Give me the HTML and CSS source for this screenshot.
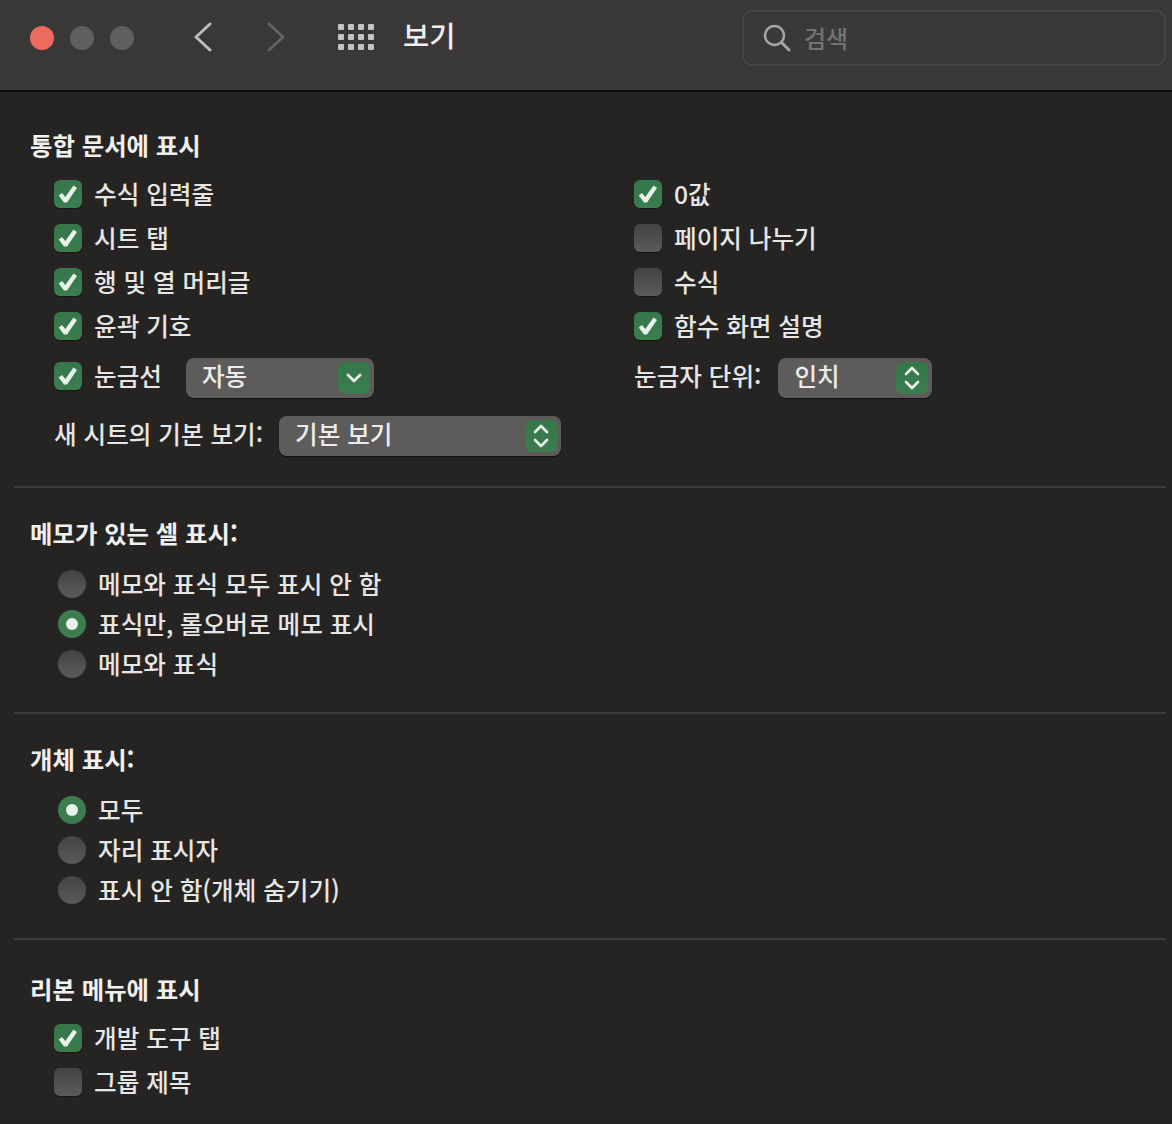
FILE: index.html

```html
<!DOCTYPE html>
<html lang="ko">
<head>
    <meta charset="UTF-8">
    <title>보기</title>
    <link rel="stylesheet" href="styles.css">
</head>
<body>

    <header class="toolbar">
        <div class="traffic">
            <span class="light red"></span>
            <span class="light"></span>
            <span class="light"></span>
        </div>
        <svg class="nav-back" width="20" height="30" viewBox="0 0 20 30"><path d="M17 2 L3 15 L17 28" fill="none" stroke="#bdbdbb" stroke-width="3" stroke-linecap="round" stroke-linejoin="round"/></svg>
        <svg class="nav-next" width="20" height="30" viewBox="0 0 20 30"><path d="M3 2 L17 15 L3 28" fill="none" stroke="#626261" stroke-width="3" stroke-linecap="round" stroke-linejoin="round"/></svg>
        <div class="app-grid">
            <i></i><i></i><i></i><i></i>
            <i></i><i></i><i></i><i></i>
            <i></i><i></i><i></i><i></i>
        </div>
        <div class="toolbar-title">보기</div>
        <div class="search">
            <svg width="28" height="28" viewBox="0 0 28 28"><circle cx="11.5" cy="11.5" r="9.5" fill="none" stroke="#a5a5a3" stroke-width="2.4"/><path d="M18.5 18.5 L26 26" stroke="#a5a5a3" stroke-width="3" stroke-linecap="round"/></svg>
            <span>검색</span>
        </div>
    </header>

    <section class="group group-display">
        <h3>통합 문서에 표시</h3>
        <div class="columns">
            <div class="col-left">
                <label class="row"><span class="check on"></span>수식 입력줄</label>
                <label class="row"><span class="check on"></span>시트 탭</label>
                <label class="row"><span class="check on"></span>행 및 열 머리글</label>
                <label class="row"><span class="check on"></span>윤곽 기호</label>
                <div class="row row-select">
                    <span class="check on"></span>눈금선
                    <div class="select select-auto">자동<span class="arrows"><svg width="16" height="10" viewBox="0 0 16 10"><path d="M2 2 L8 8 L14 2" fill="none" stroke="#eef3ef" stroke-width="2.8" stroke-linecap="round" stroke-linejoin="round"/></svg></span></div>
                </div>
            </div>
            <div class="col-right">
                <label class="row"><span class="check on"></span>0값</label>
                <label class="row"><span class="check"></span>페이지 나누기</label>
                <label class="row"><span class="check"></span>수식</label>
                <label class="row"><span class="check on"></span>함수 화면 설명</label>
                <div class="row row-select row-units">
                    눈금자 단위:
                    <div class="select select-units">인치<span class="arrows"><svg width="16" height="26" viewBox="0 0 16 26"><path d="M2 9 L8 3 L14 9 M2 17 L8 23 L14 17" fill="none" stroke="#eef3ef" stroke-width="2.6" stroke-linecap="round" stroke-linejoin="round"/></svg></span></div>
                </div>
            </div>
        </div>
        <div class="row row-default">
            새 시트의 기본 보기:
            <div class="select select-default">기본 보기<span class="arrows"><svg width="16" height="26" viewBox="0 0 16 26"><path d="M2 9 L8 3 L14 9 M2 17 L8 23 L14 17" fill="none" stroke="#eef3ef" stroke-width="2.6" stroke-linecap="round" stroke-linejoin="round"/></svg></span></div>
        </div>
    </section>

    <section class="group group-radio group-memo">
        <h3>메모가 있는 셀 표시:</h3>
        <label class="radio-row"><span class="radio"></span>메모와 표식 모두 표시 안 함</label>
        <label class="radio-row"><span class="radio on"></span>표식만, 롤오버로 메모 표시</label>
        <label class="radio-row"><span class="radio"></span>메모와 표식</label>
    </section>

    <section class="group group-radio group-objects">
        <h3>개체 표시:</h3>
        <label class="radio-row"><span class="radio on"></span>모두</label>
        <label class="radio-row"><span class="radio"></span>자리 표시자</label>
        <label class="radio-row"><span class="radio"></span>표시 안 함(개체 숨기기)</label>
    </section>

    <section class="group group-ribbon">
        <h3>리본 메뉴에 표시</h3>
        <label class="row"><span class="check on"></span>개발 도구 탭</label>
        <label class="row"><span class="check"></span>그룹 제목</label>
    </section>

</body>
</html>
```

FILE: styles.css

```css
* {
    margin: 0;
    padding: 0;
    box-sizing: border-box;
}
html, body {
    height: 1124px;
    overflow: hidden;
}
body {
    background-color: #262423;
    color: #e6e6e5;
    font-family: "Noto Sans CJK KR", "Noto Sans", sans-serif;
    font-size: 24.6px;
    font-weight: 500;
}

/* Toolbar */
.toolbar {
    height: 92px;
    background: linear-gradient(#3a3938, #393837);
    border-bottom: 2px solid #0c0b0b;
    display: flex;
    align-items: center;
    padding: 0 6px 14px 30px;
}
.traffic {
    display: flex;
    gap: 16px;
}
.light {
    width: 24px;
    height: 24px;
    border-radius: 50%;
    background: #5f5f5d;
}
.light.red {
    background: #ec6a5e;
}
.nav-back {
    margin: 0 0 2px 59px;
}
.nav-next {
    margin: 0 0 2px 53px;
}
.app-grid {
    margin: 0 0 2px 52px;
    display: grid;
    grid-template-columns: repeat(4, 6px);
    grid-template-rows: repeat(3, 6px);
    gap: 4px;
}
.app-grid i {
    background: #c4c4c2;
    border-radius: 1px;
}
.toolbar-title {
    margin-left: 29px;
    color: #efefee;
    font-size: 28.5px;
    font-weight: 500;
    line-height: 40px;
    position: relative;
    top: -3px;
}
.search {
    margin-left: auto;
    width: 424px;
    height: 56px;
    border: 2px solid #454544;
    border-radius: 10px;
    background: #3a3938;
    display: flex;
    align-items: center;
    padding-left: 20px;
    gap: 13px;
    color: #737372;
    font-size: 24px;
}
.search svg {
    margin-left: -1px;
}
.search span {
    padding-bottom: 2px;
}

/* Groups */
.group {
    margin: 0 6px 0 14px;
    padding-left: 16px;
    border-bottom: 2px solid #3d3b3a;
}
.group:last-child {
    border-bottom: none;
}
.group h3 {
    color: #f0f0ef;
    font-size: 24.4px;
    font-weight: 700;
    line-height: 36px;
}
.group-display {
    height: 396px;
    padding-top: 35px;
}
.group-memo {
    height: 226px;
    padding-top: 27px;
}
.group-objects {
    height: 226px;
    padding-top: 27px;
}
.group-ribbon {
    padding-top: 31px;
}

/* Check rows */
.columns {
    display: flex;
    margin-top: 9px;
}
.col-left {
    width: 604px;
}
.col-right .row {
    margin-left: 0;
}
.row {
    display: flex;
    align-items: center;
    height: 44px;
    margin-left: 24px;
    padding-bottom: 2px;
}
.check {
    width: 28px;
    height: 28px;
    margin-right: 12px;
    border-radius: 6px;
    background: linear-gradient(#444342, #5a5a58);
    box-shadow: 0 1px 1px rgba(0, 0, 0, 0.4);
    flex: none;
    position: relative;
    top: 1px;
}
.check.on {
    background: linear-gradient(#35774a, #3c7d50);
}
.check.on::after {
    content: "";
    position: absolute;
    inset: 0;
    background: #e9f1eb;
    clip-path: polygon(4.7px 15.6px, 8px 13px, 11.3px 17px, 19.5px 5.5px, 23px 8px, 13px 22.5px, 10px 22.5px);
}
.row-select {
    margin-top: 6px;
    height: 44px;
}
.row-default {
    height: 44px;
    margin-top: 14px;
}

/* Pop-up buttons */
.select {
    height: 40px;
    border-radius: 8px;
    background: #5d5c5b;
    box-shadow: 0 1px 1px rgba(0, 0, 0, 0.5);
    color: #ececeb;
    display: flex;
    align-items: center;
    padding: 0 0 6px 16px;
    position: relative;
    top: 3px;
}
.select-auto {
    width: 188px;
    margin-left: 24px;
}
.select-units {
    width: 154px;
    margin-left: 17px;
}
.select-default {
    width: 282px;
    margin-left: 16px;
}
.arrows {
    position: absolute;
    right: 4px;
    top: 4px;
    width: 32px;
    height: 32px;
    border-radius: 7px;
    background: linear-gradient(#35774a, #3c7d50);
    display: flex;
    align-items: center;
    justify-content: center;
}

/* Radio rows */
.group-radio h3 {
    margin-bottom: 13px;
}
.radio-row {
    display: flex;
    align-items: center;
    height: 40px;
    margin-left: 28px;
    padding-bottom: 2px;
}
.radio {
    width: 28px;
    height: 28px;
    margin-right: 12px;
    border-radius: 50%;
    background: linear-gradient(#444342, #5a5a58);
    flex: none;
    position: relative;
    top: 1px;
}
.radio.on {
    background: #3c7d50;
}
.radio.on::after {
    content: "";
    position: absolute;
    left: 8px;
    top: 8px;
    width: 12px;
    height: 12px;
    border-radius: 50%;
    background: #e9f1eb;
}
.group-ribbon h3 {
    margin-bottom: 9px;
}
```
